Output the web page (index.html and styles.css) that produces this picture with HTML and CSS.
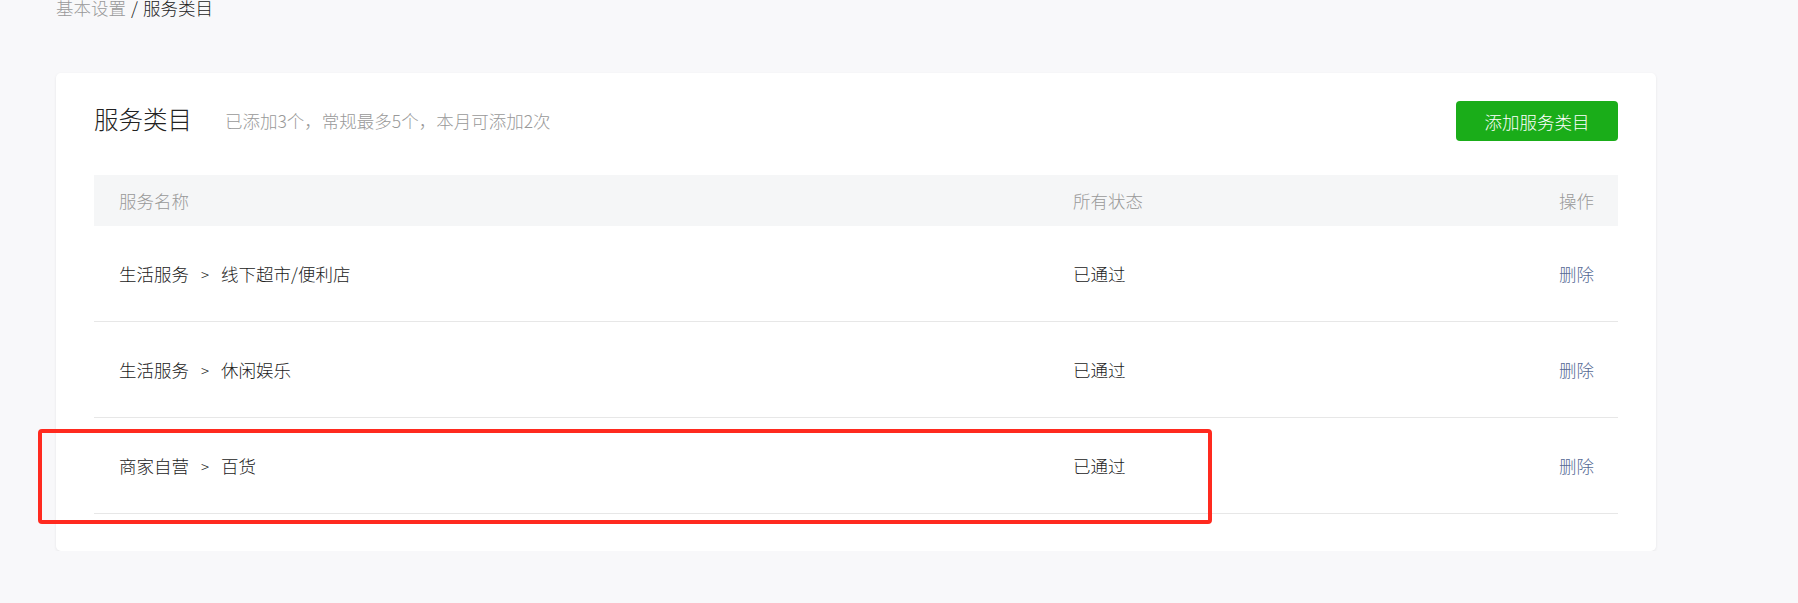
FILE: index.html
```html
<!DOCTYPE html>
<html lang="zh-CN">
<head>
<meta charset="utf-8">
<title>服务类目</title>
<link rel="stylesheet" href="styles.css">
</head>
<body>
<div class="page">
  <div class="breadcrumb"><span class="crumb-muted">基本设置</span><span class="crumb-sep">/</span><span class="crumb-current">服务类目</span></div>
  <div class="card">
    <div class="card-head">
      <div class="head-left">
        <h1 class="title">服务类目</h1>
        <span class="subtitle">已添加3个，常规最多5个，本月可添加2次</span>
      </div>
      <button class="btn-primary">添加服务类目</button>
    </div>
    <div class="table">
      <div class="row row-head">
        <div class="cell">服务名称</div>
        <div class="cell">所有状态</div>
        <div class="cell cell-right">操作</div>
      </div>
      <div class="row">
        <div class="cell">生活服务<span class="arrow">&gt;</span>线下超市/便利店</div>
        <div class="cell">已通过</div>
        <div class="cell cell-right"><a class="link">删除</a></div>
      </div>
      <div class="row">
        <div class="cell">生活服务<span class="arrow">&gt;</span>休闲娱乐</div>
        <div class="cell">已通过</div>
        <div class="cell cell-right"><a class="link">删除</a></div>
      </div>
      <div class="row row-marked">
        <div class="cell">商家自营<span class="arrow">&gt;</span>百货</div>
        <div class="cell">已通过</div>
        <div class="cell cell-right"><a class="link">删除</a></div>
        <div class="mark-box"></div>
      </div>
    </div>
  </div>
</div>
</body>
</html>
```

FILE: styles.css
```css
html, body {
  margin: 0;
  padding: 0;
  background: #f8f8fa;
}
body {
  font-family: "Noto Sans CJK SC", "Noto Sans", sans-serif;
  font-weight: 300;
  color: #222;
}
.page {
  padding-left: 56px;
  width: 1600px;
}
.breadcrumb {
  font-size: 17.5px;
  line-height: 18px;
  height: 18px;
  margin-top: -1px;
  margin-bottom: 56px;
  color: #999;
}
.crumb-sep {
  margin: 0 5px;
  color: #222;
}
.crumb-current {
  color: #222;
}
.card {
  background: #fff;
  border-radius: 5px;
  box-shadow: 0 1px 3px rgba(0, 0, 0, 0.08);
  padding: 28px 38px 37px;
}
.card-head {
  display: flex;
  align-items: center;
  justify-content: space-between;
  height: 40px;
  margin-bottom: 34px;
}
.head-left {
  display: flex;
  align-items: center;
  margin-top: -4px;
}
.title {
  margin: 0;
  font-size: 24.5px;
  font-weight: 300;
  color: #222;
  line-height: 30px;
}
.subtitle {
  margin-left: 33px;
  font-size: 17.5px;
  color: #999;
  margin-top: 2px;
}
.btn-primary {
  height: 40px;
  width: 162px;
  border: 0;
  border-radius: 4px;
  background: #1aad19;
  color: #fff;
  font-family: inherit;
  font-weight: 300;
  font-size: 17.5px;
  padding: 0;
  cursor: pointer;
}
.table {
  width: 1524px;
}
.row {
  display: grid;
  grid-template-columns: 954px 1fr 140px;
  align-items: center;
  height: 95px;
  border-bottom: 1px solid #e7e7e7;
  font-size: 17.5px;
  color: #222;
  position: relative;
}
.row-head {
  height: 51px;
  background: #f5f6f7;
  border-bottom: 0;
  color: #999;
}
.cell {
  padding: 0 25px;
  white-space: nowrap;
}
.cell-right {
  text-align: right;
  padding-right: 24px;
}
.arrow {
  display: inline-block;
  margin: 0 12px;
  font-size: 15px;
}
.link {
  color: #576b95;
  text-decoration: none;
  cursor: pointer;
}
.mark-box {
  position: absolute;
  left: -56px;
  top: 11px;
  width: 1166px;
  height: 87px;
  border: 4px solid #ff2a1f;
  border-radius: 4px;
}
```
